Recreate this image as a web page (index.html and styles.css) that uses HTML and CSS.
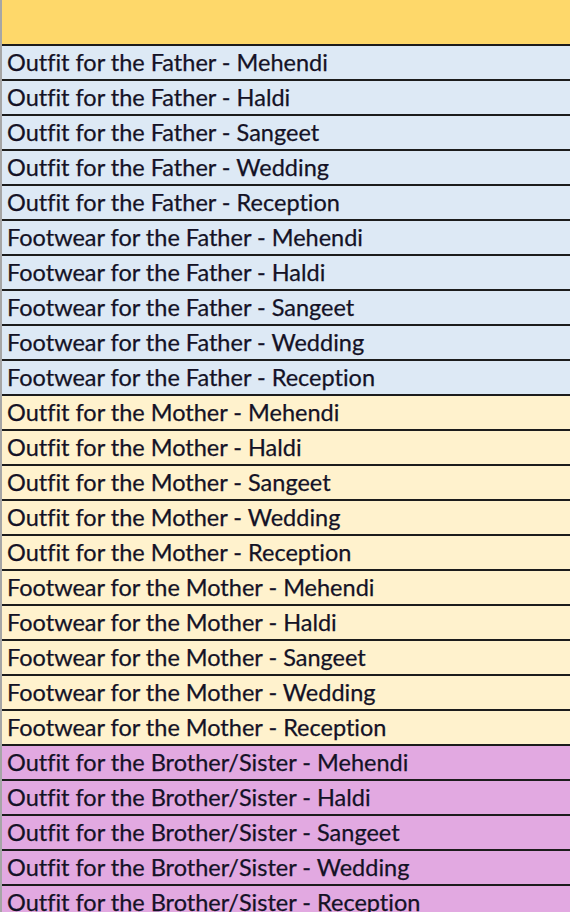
FILE: index.html
```html
<!DOCTYPE html>
<html>
<head>
<meta charset="utf-8">
<link rel="stylesheet" href="styles.css">
</head>
<body>
<div class="sheet">
  <div class="header"></div>
  <div class="row father">Outfit for the Father - Mehendi</div>
  <div class="row father">Outfit for the Father - Haldi</div>
  <div class="row father">Outfit for the Father - Sangeet</div>
  <div class="row father">Outfit for the Father - Wedding</div>
  <div class="row father">Outfit for the Father - Reception</div>
  <div class="row father">Footwear for the Father - Mehendi</div>
  <div class="row father">Footwear for the Father - Haldi</div>
  <div class="row father">Footwear for the Father - Sangeet</div>
  <div class="row father">Footwear for the Father - Wedding</div>
  <div class="row father">Footwear for the Father - Reception</div>
  <div class="row mother">Outfit for the Mother - Mehendi</div>
  <div class="row mother">Outfit for the Mother - Haldi</div>
  <div class="row mother">Outfit for the Mother - Sangeet</div>
  <div class="row mother">Outfit for the Mother - Wedding</div>
  <div class="row mother">Outfit for the Mother - Reception</div>
  <div class="row mother">Footwear for the Mother - Mehendi</div>
  <div class="row mother">Footwear for the Mother - Haldi</div>
  <div class="row mother">Footwear for the Mother - Sangeet</div>
  <div class="row mother">Footwear for the Mother - Wedding</div>
  <div class="row mother">Footwear for the Mother - Reception</div>
  <div class="row sibling">Outfit for the Brother/Sister - Mehendi</div>
  <div class="row sibling">Outfit for the Brother/Sister - Haldi</div>
  <div class="row sibling">Outfit for the Brother/Sister - Sangeet</div>
  <div class="row sibling">Outfit for the Brother/Sister - Wedding</div>
  <div class="row sibling">Outfit for the Brother/Sister - Reception</div>
</div>
</body>
</html>
```
FILE: styles.css
```css
html, body {
  margin: 0;
  padding: 0;
  background: #ffffff;
  overflow: hidden;
}
.sheet {
  width: 570px;
  height: 912px;
  overflow: hidden;
  border-left: 2px solid #a6a6a6;
  box-sizing: border-box;
  display: flex;
  flex-direction: column;
  font-family: Lato, "Open Sans", sans-serif;
  font-variant-ligatures: none;
}
.header {
  height: 44px;
  flex: none;
  background: #fed86a;
  border-bottom: 2px solid #1c1c1c;
}
.row {
  flex: none;
  height: 33px;
  line-height: 33px;
  border-bottom: 2px solid #1c1c1c;
  padding-left: 5px;
  font-size: 23.5px;
  color: #141226;
  white-space: nowrap;
  -webkit-text-stroke: 0.25px #141226;
}
.father { background: #dde9f5; }
.mother { background: #fff2cd; }
.sibling { background: #e2a9e1; }
```
